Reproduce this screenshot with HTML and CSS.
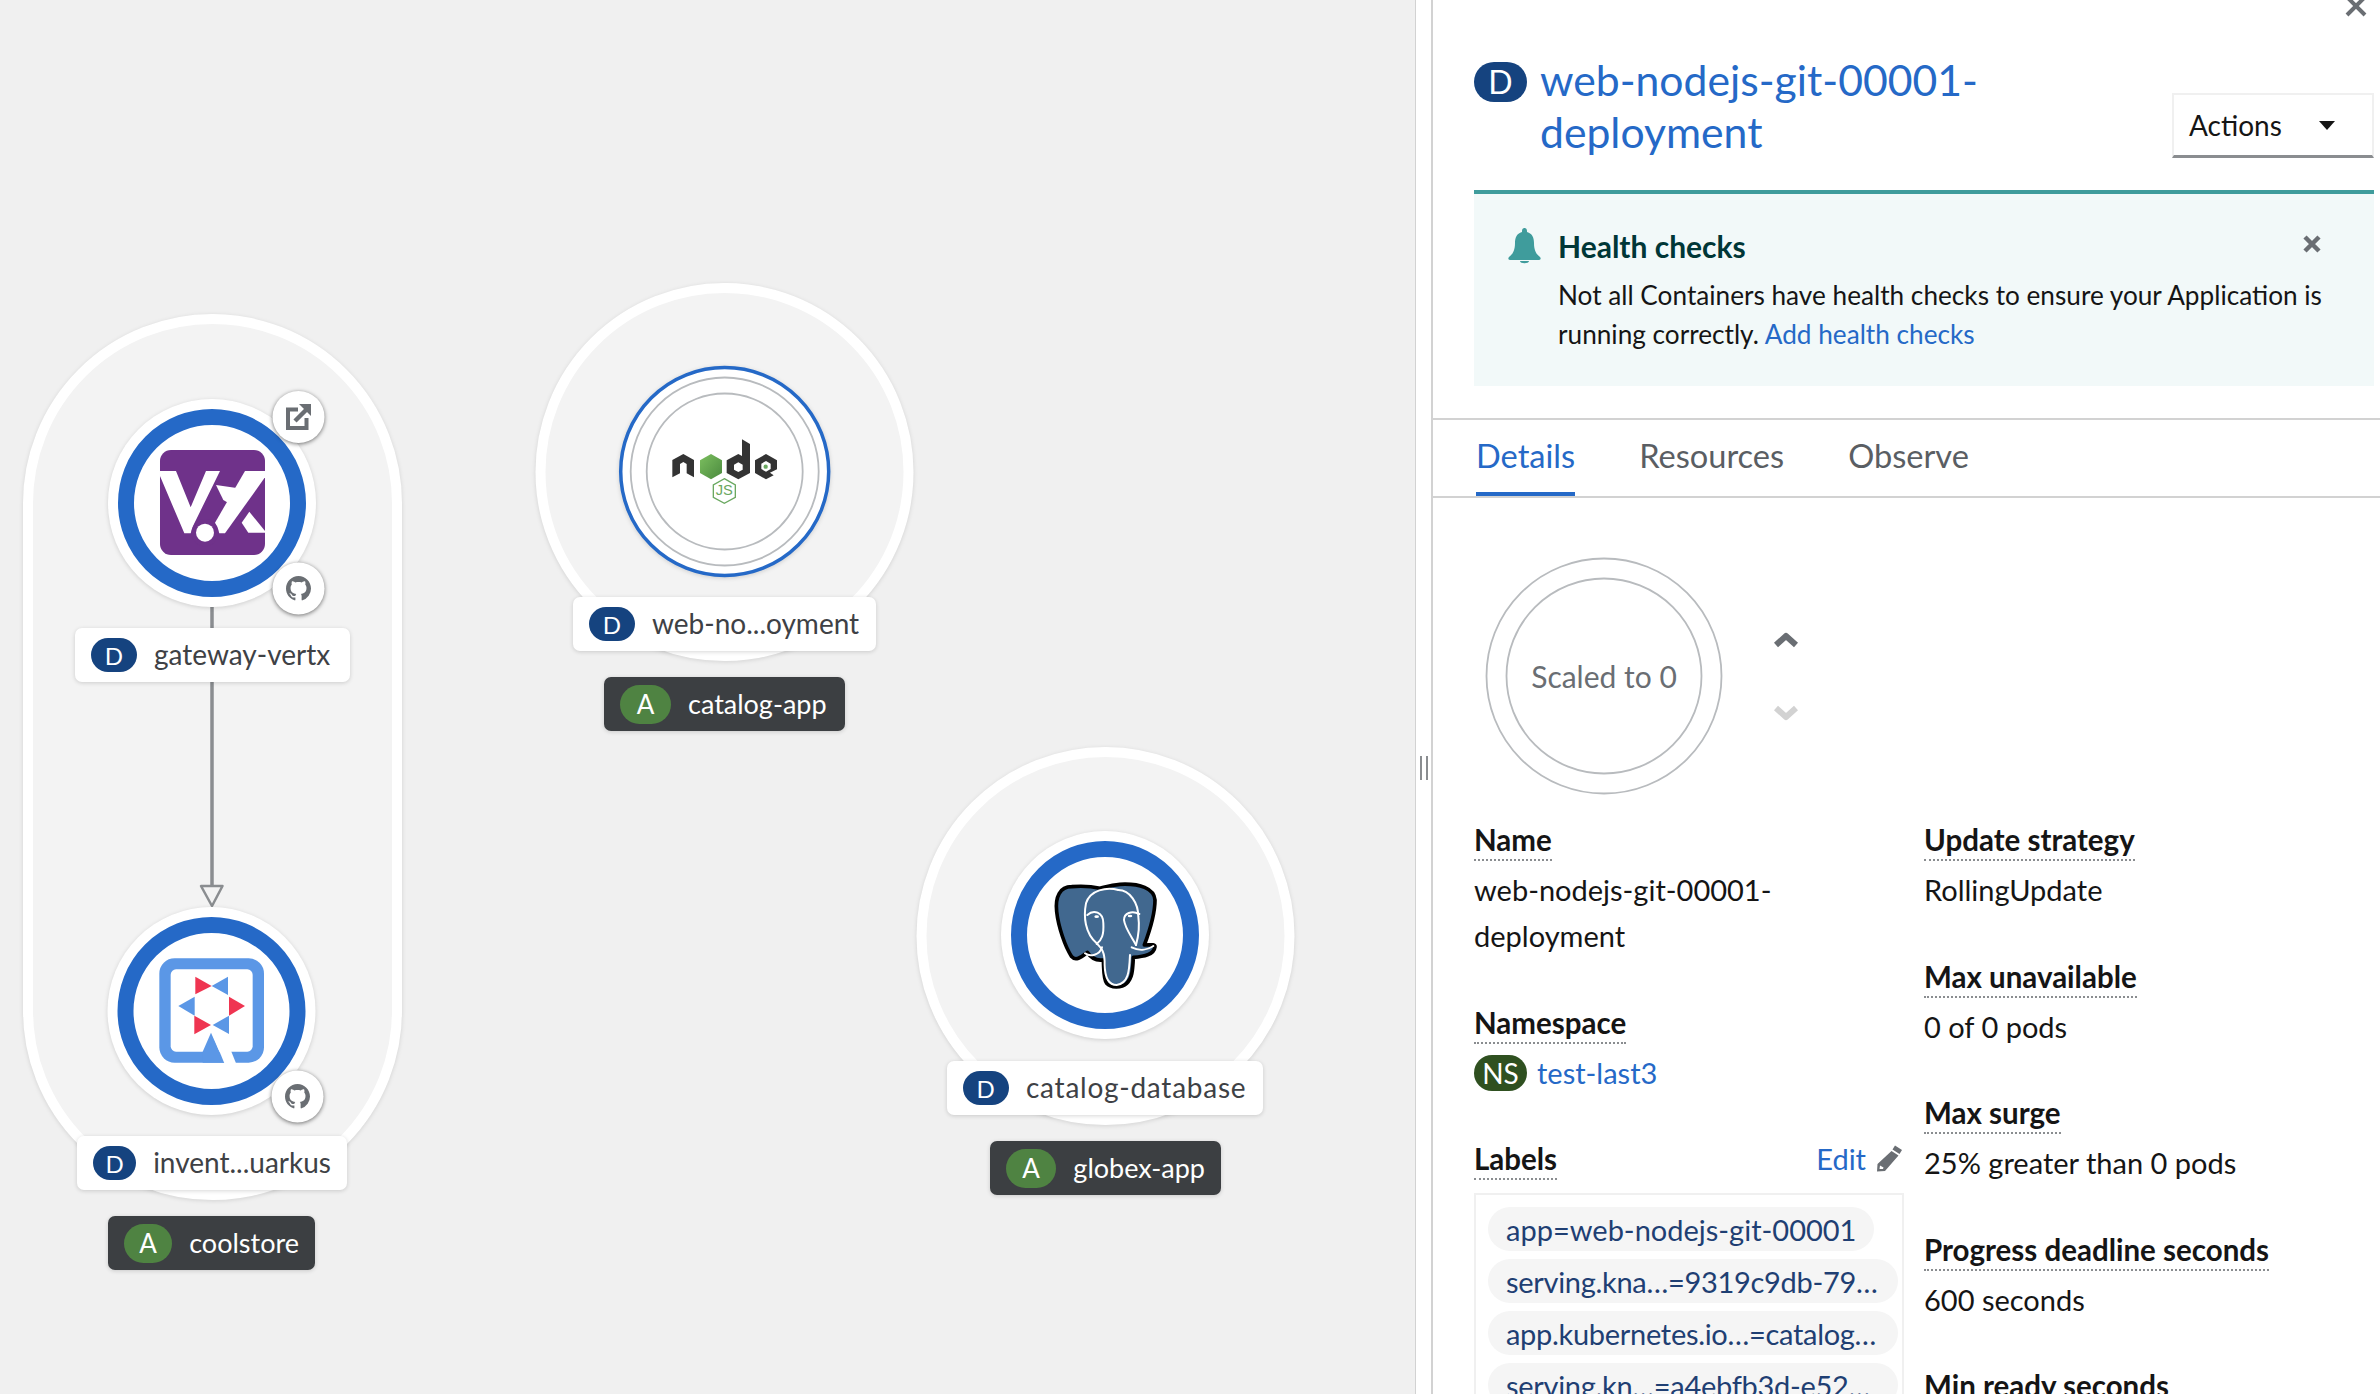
FILE: index.html
```html
<!DOCTYPE html>
<html lang="en">
<head>
<meta charset="utf-8">
<title>Topology</title>
<link rel="stylesheet" href="styles.css">
</head>
<body>
<div class="app">
  <main class="canvas">
    <svg class="graph" width="1415" height="1394" viewBox="0 0 1415 1394" xmlns="http://www.w3.org/2000/svg">
      <defs>
        <linearGradient id="nodeGreen" x1="0" y1="0" x2="1" y2="1">
          <stop offset="0" stop-color="#7cbf5f"/>
          <stop offset="1" stop-color="#4b8a3f"/>
        </linearGradient>
        <path id="octo" d="M8 0C3.58 0 0 3.58 0 8c0 3.54 2.29 6.53 5.47 7.59.4.07.55-.17.55-.38 0-.19-.01-.82-.01-1.49-2.01.37-2.53-.49-2.69-.94-.09-.23-.48-.94-.82-1.13-.28-.15-.68-.52-.01-.53.63-.01 1.08.58 1.23.82.72 1.21 1.87.87 2.33.66.07-.52.28-.87.51-1.07-1.78-.2-3.64-.89-3.64-3.95 0-.87.31-1.59.82-2.15-.08-.2-.36-1.02.08-2.12 0 0 .67-.21 2.2.82.64-.18 1.32-.27 2-.27.68 0 1.36.09 2 .27 1.53-1.04 2.2-.82 2.2-.82.44 1.1.16 1.92.08 2.12.51.56.82 1.27.82 2.15 0 3.07-1.87 3.75-3.65 3.95.29.25.54.73.54 1.48 0 1.07-.01 1.93-.01 2.2 0 .21.15.46.55.38A8.013 8.013 0 0016 8c0-4.42-3.58-8-8-8z"/>
      </defs>

      <rect class="group" x="28" y="319" width="369" height="876" rx="184.5"/>
      <circle class="group" cx="724.5" cy="472" r="184"/>
      <circle class="group" cx="1105.5" cy="936" r="184"/>

      <path class="edge" d="M212 607V887"/>
      <path class="arrow" d="M201 886H222.500L212 906Z"/>

      <!-- gateway-vertx -->
      <circle class="node" cx="212" cy="503" r="104"/>
      <circle class="ring" cx="212" cy="503" r="86"/>
      <g transform="translate(130 400) scale(.33333)">
        <rect x="90" y="150" width="315" height="315" rx="33" fill="#6f328a"/>
        <g fill="#fff">
          <polygon points="90,228 90,213 138,213 182,322 228,213 270,213 192,372 182,400 163,400"/>
          <polygon points="258,255 325,265 300,312 280,300"/>
          <polygon points="345,213 405,213 405,232 285,400 268,400 255,368"/>
          <polygon points="358,335 405,393 405,398 355,398 335,368"/>
        </g>
        <circle cx="225" cy="398" r="41" fill="#6f328a"/>
        <circle cx="225" cy="398" r="27" fill="#fff"/>
      </g>
      <circle class="deco" cx="298.500" cy="417" r="26"/>
      <g class="deco-icon">
        <path class="ext-box" d="M298 409.500H288V428H306.500V418"/>
        <path class="ext-line" d="M295 421L307 409"/>
        <polygon points="299,404 311,404 311,416"/>
      </g>
      <circle class="deco" cx="298.500" cy="588.500" r="26"/>
      <use href="#octo" class="deco-icon" transform="translate(286 576) scale(1.5625)"/>

      <!-- inventory quarkus -->
      <circle class="node" cx="211.500" cy="1011" r="104"/>
      <circle class="ring" cx="211.500" cy="1011" r="86"/>
      <g transform="translate(130 930) scale(.33333)">
        <rect x="88" y="85" width="314" height="313" rx="46" fill="#5b97e6"/>
        <rect x="122" y="118" width="246" height="247" rx="16" fill="#fff"/>
        <polygon fill="#5b97e6" points="243,308 218,365 218,398 283,398"/>
        <polygon fill="#fff" points="246,310 283,400 318,400 300,355"/>
        <g fill="#ef3551">
          <polygon points="196,140 245,168 196,193"/>
          <polygon points="297,200 345,228 297,257"/>
          <polygon points="193,257 243,285 193,313"/>
        </g>
        <g fill="#5b97e6">
          <polygon points="245,168 294,140 294,195"/>
          <polygon points="145,228 194,200 194,257"/>
          <polygon points="248,285 297,257 297,312"/>
        </g>
      </g>
      <circle class="deco" cx="297.500" cy="1096.500" r="26"/>
      <use href="#octo" class="deco-icon" transform="translate(285 1084) scale(1.5625)"/>

      <!-- node js -->
      <circle class="node-thin" cx="724.700" cy="471.500" r="104"/>
      <circle class="pod-ring" cx="724.700" cy="471.500" r="94"/>
      <circle class="pod-ring" cx="724.700" cy="471.500" r="78"/>
      <g transform="translate(630 380) scale(.33333)">
        <polygon fill="#333" points="127,240 160,222 192,240 192,292 170,280 170,252 160,246 150,252 150,280 127,292"/>
        <polygon fill="url(#nodeGreen)" points="243,222 276,241 276,279 243,298 210,279 210,241"/>
        <path fill="#333" d="M336 178L360 192V279L325 298L290 279V241L325 222L336 228Z"/>
        <polygon fill="#fff" points="325,247 338,254 338,269 325,276 312,269 312,254"/>
        <polygon fill="#333" points="408,222 441,241 441,268 420,278 431,286 408,298 375,279 375,241"/>
        <polygon fill="#fff" points="408,243 422,251 422,267 408,275 394,267 394,251"/>
        <circle cx="407" cy="260" r="6.500" fill="#6aa860"/>
        <polygon class="js-hex" points="283,296 316,315 316,352 283,370 250,352 250,315"/>
        <text class="js" x="283" y="346" text-anchor="middle">JS</text>
      </g>

      <!-- postgres -->
      <circle class="node" cx="1105" cy="935" r="104"/>
      <circle class="ring" cx="1105" cy="935" r="86"/>
      <g transform="translate(1000 840) scale(.33333)">
        <path class="pg-body" d="M215 140C180 140 165 170 170 215C175 260 195 320 215 350C228 365 245 350 262 337C275 358 295 362 310 360C312 395 310 415 320 430C332 444 365 444 380 430C396 415 398 395 400 352C430 350 462 345 465 320C465 310 445 316 433 315C450 270 465 220 465 180C462 145 420 130 360 133C335 135 320 140 300 145C270 138 240 138 215 140Z"/>
        <g class="pg-line">
          <path d="M355 150C320 140 270 150 258 190C250 230 255 280 290 310C305 325 315 335 314 375C315 420 330 435 350 435C385 430 388 395 390 345"/>
          <path d="M262 225C280 208 310 215 310 250C312 285 305 300 290 312"/>
          <path d="M418 222C395 210 372 220 372 240C375 265 395 290 408 315"/>
          <path d="M355 150C390 150 415 190 415 230C420 265 415 290 408 315"/>
          <path d="M255 340C270 352 300 345 306 322"/>
          <path d="M395 322C420 335 445 328 460 318"/>
        </g>
        <ellipse cx="290" cy="230" rx="7" ry="4" fill="#fff"/>
        <ellipse cx="390" cy="228" rx="7" ry="4" fill="#fff"/>
      </g>
    </svg>

    <div class="tag tag-gateway"><span class="kind kind-d">D</span><span class="tag-text">gateway-vertx</span></div>
    <div class="tag tag-inventory"><span class="kind kind-d">D</span><span class="tag-text">invent...uarkus</span></div>
    <div class="tag tag-web"><span class="kind kind-d">D</span><span class="tag-text">web-no...oyment</span></div>
    <div class="tag tag-catalog"><span class="kind kind-d">D</span><span class="tag-text">catalog-database</span></div>
    <div class="tag app-tag tag-coolstore"><span class="kind kind-a">A</span><span class="tag-text">coolstore</span></div>
    <div class="tag app-tag tag-catalogapp"><span class="kind kind-a">A</span><span class="tag-text">catalog-app</span></div>
    <div class="tag app-tag tag-globex"><span class="kind kind-a">A</span><span class="tag-text">globex-app</span></div>
  </main>

  <div class="gutter"><span class="handle"></span></div>

  <aside class="panel">
    <svg class="close" width="22" height="22" viewBox="0 0 22 22" xmlns="http://www.w3.org/2000/svg"><path d="M2 2L20 20M20 2L2 20"/></svg>

    <header class="head">
      <h1 class="title"><span class="title-badge">D</span><a class="title-link">web-nodejs-git-00001-deployment</a></h1>
      <button class="actions"><span>Actions</span><span class="caret"></span></button>
    </header>

    <section class="alert">
      <svg class="bell" width="33" height="36" viewBox="0 0 33 36" xmlns="http://www.w3.org/2000/svg"><path d="M16.500 0C15 0 14 1 14 3V4C8.500 5.500 7 10 7 15C7 22 5 26 1 29C0 30 0 32 2 32H31C33 32 33 30 32 29C28 26 26 22 26 15C26 10 24.500 5.500 19 4V3C19 1 18 0 16.500 0ZM12 33H21C21 36 12 36 12 33Z"/></svg>
      <div class="alert-body">
        <h2 class="alert-title">Health checks</h2>
        <p class="alert-text">Not all Containers have health checks to ensure your Application is<br>running correctly. <a class="link">Add health checks</a></p>
      </div>
      <svg class="alert-close" width="20" height="20" viewBox="0 0 20 20" xmlns="http://www.w3.org/2000/svg"><path d="M3 3L17 17M17 3L3 17"/></svg>
    </section>

    <nav class="tabs">
      <a class="tab tab-on">Details</a>
      <a class="tab">Resources</a>
      <a class="tab">Observe</a>
    </nav>

    <section class="body">
      <div class="scale">
        <div class="pod">
          <svg width="240" height="240" viewBox="0 0 240 240" xmlns="http://www.w3.org/2000/svg">
            <circle class="pod-ring" cx="120" cy="120" r="117.500"/>
            <circle class="pod-ring" cx="120" cy="120" r="97.500"/>
          </svg>
          <span class="pod-text">Scaled to 0</span>
        </div>
        <div class="steppers">
          <svg class="chev" width="26" height="16" viewBox="0 0 26 16" xmlns="http://www.w3.org/2000/svg"><path d="M3 13L13 4L23 13"/></svg>
          <svg class="chev chev-off" width="26" height="16" viewBox="0 0 26 16" xmlns="http://www.w3.org/2000/svg"><path d="M3 3L13 12L23 3"/></svg>
        </div>
      </div>

      <div class="cols">
        <dl class="col">
          <div class="item">
            <dt class="term"><span>Name</span></dt>
            <dd class="val val-name">web-nodejs-git-00001-deployment</dd>
          </div>
          <div class="item">
            <dt class="term"><span>Namespace</span></dt>
            <dd class="val val-ns"><span class="ns">NS</span><a class="link">test-last3</a></dd>
          </div>
          <div class="item">
            <dt class="term term-row"><span>Labels</span><a class="edit">Edit<svg width="30" height="28" viewBox="0 0 30 28" xmlns="http://www.w3.org/2000/svg"><path d="M21 1.500L28 6L25.500 10L18.500 5.500ZM17.500 7L24.500 11.500L11 27L3 27.500L3.500 20ZM6 21.500L5.500 25L9 25L9.500 23.500Z"/></svg></a></dt>
            <dd class="chips">
              <span class="chip">app=web-nodejs-git-00001</span>
              <span class="chip chip-cut">serving.kna…=9319c9db-79…</span>
              <span class="chip chip-cut">app.kubernetes.io…=catalog…</span>
              <span class="chip chip-cut">serving.kn…=a4ebfb3d-e52…</span>
            </dd>
          </div>
        </dl>
        <dl class="col">
          <div class="item">
            <dt class="term"><span>Update strategy</span></dt>
            <dd class="val">RollingUpdate</dd>
          </div>
          <div class="item">
            <dt class="term"><span>Max unavailable</span></dt>
            <dd class="val">0 of 0 pods</dd>
          </div>
          <div class="item">
            <dt class="term"><span>Max surge</span></dt>
            <dd class="val">25% greater than 0 pods</dd>
          </div>
          <div class="item">
            <dt class="term"><span>Progress deadline seconds</span></dt>
            <dd class="val">600 seconds</dd>
          </div>
          <div class="item">
            <dt class="term"><span>Min ready seconds</span></dt>
          </div>
        </dl>
      </div>
    </section>
  </aside>
</div>
</body>
</html>
```
FILE: styles.css
```css
* { box-sizing: border-box; }
html, body { margin: 0; padding: 0; height: 100%; overflow: hidden; }
body { font-family: "Lato", "Noto Sans", sans-serif; font-size: 29px; color: #151515; background: #fff; }
h1, h2, p, dl, dd, dt { margin: 0; padding: 0; font-weight: inherit; font-size: inherit; }

.app { display: flex; width: 2380px; height: 1394px; overflow: hidden; }

/* canvas */
.canvas { flex: 0 0 1415px; position: relative; background: #f0f0f0; overflow: hidden; }
.graph { position: absolute; left: 0; top: 0; display: block; }
.group { fill: #f3f3f3; stroke: #fff; stroke-width: 10; filter: drop-shadow(0 1px 2px rgba(0,0,0,.12)); }
.edge { stroke: #8a8d90; stroke-width: 3.5; fill: none; }
.arrow { stroke: #8a8d90; stroke-width: 2.5; fill: #f3f3f3; stroke-linejoin: round; }
.node { fill: #fff; filter: drop-shadow(0 1px 2px rgba(0,0,0,.15)); }
.node-thin { fill: #fff; stroke: #2569c7; stroke-width: 3.5; filter: drop-shadow(0 1px 2px rgba(0,0,0,.15)); }
.ring { fill: none; stroke: #2569c7; stroke-width: 16; }
.pod-ring { fill: none; stroke: #b8bbbe; stroke-width: 1.8; }
.deco { fill: #fff; filter: drop-shadow(0 1px 2px rgba(0,0,0,.55)); }
.deco-icon { fill: #6a6e73; }
.ext-box { fill: none; stroke: #6a6e73; stroke-width: 4; }
.ext-line { fill: none; stroke: #6a6e73; stroke-width: 4.5; }
.js-hex { fill: none; stroke: #6aa860; stroke-width: 4; }
.js { fill: #6aa860; font-family: "Liberation Sans", sans-serif; font-size: 44px; }
.pg-body { fill: #41688f; stroke: #000; stroke-width: 11; stroke-linejoin: round; }
.pg-line { fill: none; stroke: #fff; stroke-width: 6; stroke-linecap: round; }

/* canvas tags */
.tag { position: absolute; display: flex; align-items: center; gap: 17px; height: 54px; padding: 0 16px; border-radius: 7px; background: #fff; color: #3e4145; font-size: 28px; white-space: nowrap; box-shadow: 0 1px 4px rgba(0,0,0,.16); }
.tag-text { padding-bottom: 2px; }
.app-tag { background: #3c3f42; color: #fff; font-size: 27px; }
.kind { display: flex; align-items: center; justify-content: center; color: #fff; font-size: 24px; }
.kind-d { width: 46px; height: 34px; border-radius: 17px; background: #15437f; }
.kind-a { width: 51px; height: 39px; border-radius: 20px; background: #4f8342; font-size: 26px; }
.tag-gateway { left: 75px; top: 628px; width: 275px; }
.tag-inventory { left: 77px; top: 1136px; width: 270px; }
.tag-web { left: 573px; top: 597px; width: 303px; }
.tag-catalog { left: 947px; top: 1061px; width: 316px; letter-spacing: .75px; }
.tag-coolstore { left: 108px; top: 1216px; width: 207px; }
.tag-catalogapp { left: 604px; top: 677px; width: 241px; }
.tag-globex { left: 990px; top: 1141px; width: 231px; }

/* gutter */
.gutter { flex: 0 0 18px; display: flex; align-items: center; justify-content: center; padding-top: 142px; background: #fff; border-left: 1px solid #d2d2d2; border-right: 2px solid #d2d2d2; }
.handle { display: block; width: 8px; height: 24px; border-left: 2px solid #8a8d90; border-right: 2px solid #8a8d90; }

/* panel */
.panel { flex: 1; position: relative; min-width: 0; height: 1394px; overflow: hidden; background: #fff; }
.close { position: absolute; right: 13px; top: -5px; }
.close path { fill: none; stroke: #6a6e73; stroke-width: 4; }

.head { display: flex; justify-content: space-between; align-items: flex-end; margin: 54px 6px 32px 41px; }
.title { display: flex; align-items: flex-start; gap: 13px; font-size: 42.700px; line-height: 52px; }
.title-badge { flex: none; display: flex; align-items: center; justify-content: center; width: 53px; height: 40px; margin-top: 8px; border-radius: 20px; background: #15437f; color: #fff; font-size: 32px; }
.title-link { width: 470px; color: #2569c7; }
.actions { display: flex; align-items: center; gap: 37px; width: 202px; height: 65px; padding: 0 0 0 15px; background: #fff; border: 2px solid #f0f0f0; border-bottom: 3px solid #8a8d90; font: inherit; font-size: 28px; color: #151515; }
.caret { width: 0; height: 0; border-left: 8px solid transparent; border-right: 8px solid transparent; border-top: 9px solid #151515; }

.alert { display: flex; align-items: flex-start; gap: 17px; height: 196px; margin: 0 6px 32px 41px; padding: 34px 0 0 34px; background: #f2f9f9; border-top: 4px solid #3f9c9c; position: relative; }
.bell { flex: none; fill: #3f9c9c; }
.alert-body { flex: 1; }
.alert-title { font-size: 30px; font-weight: 700; line-height: 37px; color: #003737; }
.alert-text { line-height: 39px; margin-top: 11px; font-size: 26.200px; }
.alert-close { position: absolute; right: 52px; top: 40px; }
.alert-close path { fill: none; stroke: #6a6e73; stroke-width: 4.5; }
.link { color: #2569c7; }

.tabs { display: flex; gap: 64px; height: 80px; padding: 0 0 0 43px; border-top: 2px solid #d2d2d2; border-bottom: 2px solid #d2d2d2; font-size: 32.600px; }
.tab { display: flex; align-items: center; height: 76px; padding-bottom: 2px; color: #5a5e63; margin-bottom: -2px; border-bottom: 4px solid transparent; }
.tab-on { color: #2569c7; border-bottom-color: #2569c7; }

.body { padding: 58px 6px 0 41px; }
.scale { display: flex; align-items: center; height: 240px; margin-bottom: 21px; }
.pod { position: relative; flex: none; width: 240px; height: 240px; margin-left: 10px; display: flex; align-items: center; justify-content: center; }
.pod svg { position: absolute; left: 0; top: 0; }
.pod-text { color: #6a6e73; font-size: 30px; }
.steppers { display: flex; flex-direction: column; gap: 57px; margin-left: 49px; margin-top: 0; }
.chev { display: block; }
.chev path { fill: none; stroke: #6a6e73; stroke-width: 6; stroke-linejoin: round; }
.chev-off path { stroke: #d2d2d2; }

.cols { display: grid; grid-template-columns: 430px 1fr; column-gap: 20px; }
.item { margin-bottom: 40.500px; }
.term { display: flex; height: 46px; margin-bottom: 4px; font-size: 29.500px; font-weight: 700; }
.term span { display: block; height: 44px; line-height: 46px; border-bottom: 2px dotted #8a8d90; }
.term-row { justify-content: space-between; margin-bottom: 11px; }
.edit { display: flex; align-items: center; gap: 8px; height: 44px; font-size: 29px; font-weight: 400; color: #2569c7; }
.edit svg { fill: #6a6e73; }
.val { line-height: 46px; }
.val-name { width: 320px; }
.val-ns { display: flex; align-items: center; gap: 10px; height: 46px; }
.ns { display: flex; align-items: center; justify-content: center; width: 53px; height: 36px; border-radius: 18px; background: #2f5020; color: #fff; font-size: 28px; }
.chips { display: flex; flex-direction: column; align-items: flex-start; gap: 8px; padding: 12px; border: 2px solid #f0f0f0; }
.chip { display: flex; align-items: center; height: 44px; padding: 0 18px; border-radius: 22px; background: #f5f5f5; color: #1f3f73; font-size: 29px; white-space: nowrap; }
.chip-cut { width: 410px; letter-spacing: -.3px; }
```
